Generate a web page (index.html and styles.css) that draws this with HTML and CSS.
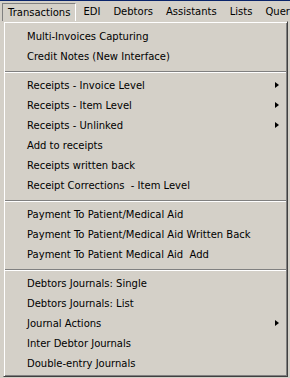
FILE: index.html
```html
<!DOCTYPE html>
<html lang="en">

<head>
    <meta charset="UTF-8">
    <meta name="viewport" content="width=device-width, initial-scale=1.0">
    <title>Transactions menu</title>
    <link rel="stylesheet" href="styles.css">
</head>

<body>
    <div class="menubar">
        <div class="menubar-item open">Transactions</div>
        <div class="menubar-item">EDI</div>
        <div class="menubar-item">Debtors</div>
        <div class="menubar-item">Assistants</div>
        <div class="menubar-item">Lists</div>
        <div class="menubar-item">Queries</div>
    </div>
    <ul class="popup">
        <li class="item">Multi-Invoices Capturing</li>
        <li class="item">Credit Notes (New Interface)</li>
        <li class="separator"></li>
        <li class="item">Receipts - Invoice Level<span class="arrow"></span></li>
        <li class="item">Receipts - Item Level<span class="arrow"></span></li>
        <li class="item">Receipts - Unlinked<span class="arrow"></span></li>
        <li class="item">Add to receipts</li>
        <li class="item">Receipts written back</li>
        <li class="item">Receipt Corrections &nbsp;- Item Level</li>
        <li class="separator"></li>
        <li class="item">Payment To Patient/Medical Aid</li>
        <li class="item">Payment To Patient/Medical Aid Written Back</li>
        <li class="item">Payment To Patient Medical Aid &nbsp;Add</li>
        <li class="separator"></li>
        <li class="item">Debtors Journals: Single</li>
        <li class="item">Debtors Journals: List</li>
        <li class="item">Journal Actions<span class="arrow"></span></li>
        <li class="item">Inter Debtor Journals</li>
        <li class="item">Double-entry Journals</li>
    </ul>
</body>

</html>
```

FILE: styles.css
```css
:root {
    --face: #d4d0c8;
    --shadow: #808080;
    --dark: #404040;
    --light: #ffffff;
}

* {
    margin: 0;
    padding: 0;
    box-sizing: border-box;
}

body {
    font-family: "DejaVu Sans", Verdana, sans-serif;
    font-size: 10px;
    color: #000;
    background: var(--face);
    width: 290px;
    height: 378px;
    overflow: hidden;
    border-top: 1px solid #0a246a;
}

.menubar {
    display: flex;
    height: 20px;
    padding: 2px 0 0 2px;
    white-space: nowrap;
}

.menubar-item {
    height: 18px;
    line-height: 18px;
    padding: 0 6px 0 6px;
    margin-right: 1px;
}

.menubar-item.open {
    border-top: 1px solid var(--shadow);
    border-left: 1px solid var(--shadow);
    border-right: 1px solid var(--light);
    padding: 0 5px 0 5px;
    line-height: 17px;
}

.popup {
    list-style: none;
    margin-left: 3px;
    width: 285px;
    border: 1px solid;
    border-color: var(--face) var(--dark) var(--dark) var(--face);
    box-shadow: inset 1px 1px var(--light), inset -1px -1px var(--shadow);
    padding: 4px 2px 3px;
}

.item {
    display: flex;
    align-items: center;
    justify-content: space-between;
    height: 20px;
    padding: 0 6px 0 21px;
    white-space: nowrap;
}

.arrow {
    width: 0;
    height: 0;
    border-left: 4px solid #000;
    border-top: 3.5px solid transparent;
    border-bottom: 3.5px solid transparent;
}

.separator {
    height: 9px;
    padding-top: 5px;
    margin: 0 -1px;
}

.separator::before {
    content: "";
    display: block;
    border-top: 1px solid var(--shadow);
    border-bottom: 1px solid var(--light);
}
```
